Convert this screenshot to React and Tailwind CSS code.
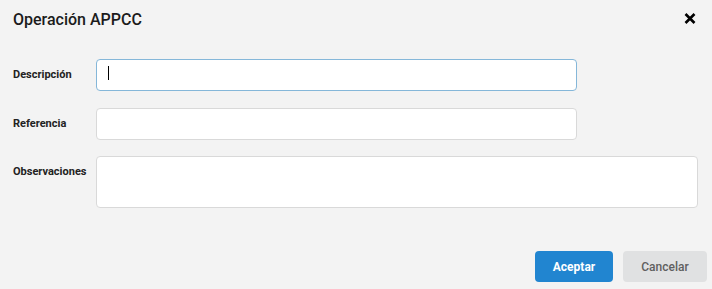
import React from "react";

export default function App() {
  return (
    <div className="w-[712px] h-[289px] bg-[#f3f3f3] flex flex-col font-['Roboto',sans-serif] text-[#1f1f1f] overflow-hidden">
      <div className="flex items-start justify-between pl-[13px] pr-[16px] pt-[10px]">
        <h1 className="text-[16px] leading-[20px] font-medium text-[#1b1b1b]">Operación APPCC</h1>
        <button className="mt-[3px] w-[12px] h-[11px] flex items-center justify-center" aria-label="Cerrar">
          <svg width="12" height="11" viewBox="0 0 12 11">
            <path d="M1.5 1 L10.5 10 M10.5 1 L1.5 10" stroke="#000" strokeWidth="2.6" strokeLinecap="butt" />
          </svg>
        </button>
      </div>

      <div className="flex flex-col pl-[13px] pr-[14px] mt-[29px]">
        <div className="flex items-start">
          <label className="w-[83px] pt-[8px] text-[11px] leading-[16px] font-bold text-[#222]">Descripción</label>
          <div className="relative">
            <input
              readOnly
              className="w-[481px] h-[32px] bg-white border border-[#85b7d9] rounded-[4px] outline-none px-3 text-[13px]"
            />
            <span className="absolute left-[12px] top-[7px] w-[1px] h-[14px] bg-black" />
          </div>
        </div>

        <div className="flex items-start mt-[17px]">
          <label className="w-[83px] pt-[8px] text-[11px] leading-[16px] font-bold text-[#222]">Referencia</label>
          <input
            readOnly
            className="w-[481px] h-[32px] bg-white border border-[#d9d9d9] rounded-[4px] outline-none px-3 text-[13px]"
          />
        </div>

        <div className="flex items-start mt-[16px]">
          <label className="w-[83px] pt-[8px] text-[11px] leading-[16px] font-bold text-[#222]">Observaciones</label>
          <textarea
            readOnly
            className="w-[602px] h-[52px] bg-white border border-[#d9d9d9] rounded-[4px] outline-none px-3 py-2 text-[13px] resize-none"
          />
        </div>
      </div>

      <div className="flex justify-end gap-[10px] pr-[5px] mt-[43px]">
        <button className="w-[78px] h-[31px] rounded-[4px] bg-[#2185d0] text-white text-[12px] font-bold">Aceptar</button>
        <button className="w-[84px] h-[31px] rounded-[4px] bg-[#e0e1e2] text-[#5f5f5f] text-[12px] font-medium">Cancelar</button>
      </div>
    </div>
  );
}
